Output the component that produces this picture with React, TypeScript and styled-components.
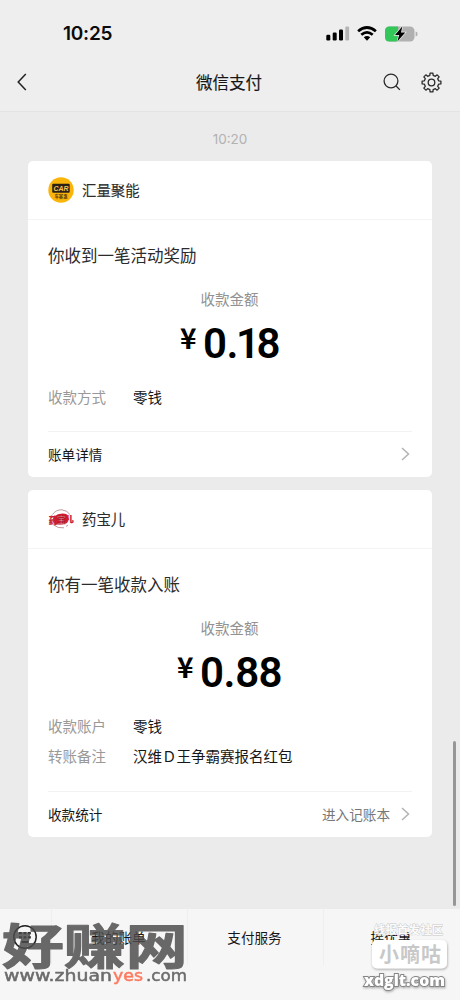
import React from 'react';
import styled, { createGlobalStyle } from 'styled-components';

const Global = createGlobalStyle`
  *{box-sizing:border-box}
  body{margin:0;background:#ebebeb;font-family:"Liberation Sans","Noto Sans CJK SC",sans-serif;color:#161616}
`;
const Screen = styled.div`
  position:relative;width:460px;height:1000px;overflow:hidden;background:#ebebeb;display:flex;flex-direction:column;
`;
const Header = styled.header`height:112px;background:#eeeeee;border-bottom:1px solid #e3e3e3;`;
const Status = styled.div`height:56px;padding:12px 42px 0 63px;display:flex;justify-content:space-between;align-items:center;`;
const Clock = styled.span`font:600 19px/24px Inter,sans-serif;letter-spacing:-.25px;color:#0a0a0a;`;
const StatusIcons = styled.div`display:flex;align-items:center;height:24px;`;
const Nav = styled.div`height:52px;display:grid;grid-template-columns:100px 1fr 100px;align-items:center;`;
const Title = styled.h1`
  margin:0 2px 0 0;text-align:center;font:400 16.5px/24px "Noto Sans CJK SC",sans-serif;-webkit-text-stroke:.15px #161616;
`;
const Back = styled.div`padding-left:16px;display:flex;`;
const Actions = styled.div`display:flex;gap:19px;align-items:center;padding-left:22px;`;
const Time = styled.div`height:49px;padding-top:17px;text-align:center;font:13.5px/20px Inter,sans-serif;color:#b2b2b2;`;
const Card = styled.section<{ $h: number }>`
  margin:0 28px 13px;height:${p => p.$h}px;background:#fff;border-radius:5px;display:flex;flex-direction:column;
  font-family:"Noto Sans CJK SC",sans-serif;
`;
const CardHead = styled.div`height:59px;flex:none;border-bottom:1px solid #f4f4f4;padding-left:20px;display:flex;align-items:center;gap:8px;`;
const Merchant = styled.span`font-size:14.4px;line-height:20px;color:#2b2b2b;-webkit-text-stroke:.1px #2b2b2b;`;
const Body = styled.div`flex:1;margin:0 20px;display:flex;flex-direction:column;`;
const Message = styled.div`margin-top:23px;font-size:16.5px;line-height:24px;color:#2b2b2b;`;
const Label = styled.div`margin:22px 1px 0 0;text-align:center;font-size:14.5px;line-height:20px;color:#929292;`;
const Amount = styled.div<{ $x: number }>`
  margin-top:10px;height:50px;padding-left:${p => p.$x}px;display:flex;color:#000;font:600 42px/50px Roboto,sans-serif;
`;
const Yen = styled.span`font:700 28px/37px "Noto Sans CJK SC",sans-serif;width:24px;`;
const Digit = styled.span<{ $w: number }>`width:${p => p.$w}px;display:flex;justify-content:center;`;
const Rows = styled.div`margin-top:18px;`;
const Row = styled.div`height:30px;display:flex;font-size:14.5px;line-height:20px;`;
const Key = styled.span`width:85px;color:#999;`;
const Value = styled.span`color:#161616;white-space:nowrap;`;
const Footer = styled.div`
  margin-top:auto;height:46px;border-top:1px solid #f2f2f2;display:flex;align-items:center;justify-content:space-between;font-size:13.6px;padding-bottom:1px;
`;
const More = styled.span`display:flex;align-items:center;gap:11px;color:#777;padding-right:2px;`;
const TabBar = styled.nav`
  margin-top:auto;height:91px;background:#f6f6f6;display:grid;grid-template-columns:51px 136px 136px 137px;font:13.6px/20px "Noto Sans CJK SC",sans-serif;
`;
const Tab = styled.div`height:56px;padding-right:2px;display:flex;align-items:center;justify-content:center;border-left:1px solid #efefef;
  &:first-child{border:0}`;
const ScrollThumb = styled.div`position:absolute;right:4px;top:741px;width:3px;height:165px;border-radius:2px;background:#979797;`;
const SiteMark = styled.div`position:absolute;left:0;top:910px;width:200px;height:84px;opacity:.83;`;
const CornerMark = styled.div`position:absolute;left:360px;top:918px;width:96px;height:76px;`;

const Chevron = () => (
  <svg width="9" height="14" viewBox="0 0 9 14" fill="none" stroke="#b3b3b3" strokeWidth="1.5"><path d="M1 1l6.5 6L1 13" /></svg>
);

const gearPath = (() => {
  const pts: string[] = [];
  const n = 8;
  for (let i = 0; i < n; i++) {
    const c = (i * 2 * Math.PI) / n - Math.PI / 2;
    [[-0.23, 7.3], [-0.15, 9.5], [0.15, 9.5], [0.23, 7.3]].forEach(([a, r]) => {
      pts.push(`${(10.5 + r * Math.cos(c + a)).toFixed(2)} ${(10.5 + r * Math.sin(c + a)).toFixed(2)}`);
    });
  }
  return `M${pts.join('L')}Z`;
})();

const Money = ({ x, value, widths }: { x: number; value: string; widths: number[] }) => (
  <Amount $x={x}><Yen>¥</Yen>{value.split('').map((c, i) => <Digit key={i} $w={widths[i]}>{c}</Digit>)}</Amount>
);

export default function App() {
  return (
    <Screen>
      <Global />
      <Header>
        <Status>
          <Clock>10:25</Clock>
          <StatusIcons>
            <svg width="92" height="20" viewBox="326 24.5 92 20">
              <g fill="#000">
                <rect x="326.3" y="35.2" width="4" height="5.8" rx="1.2" />
                <rect x="332.7" y="33" width="4" height="8" rx="1.2" />
                <rect x="339" y="30" width="4" height="11" rx="1.2" />
                <rect x="345.3" y="27" width="3.8" height="14" rx="1.2" fill="#b5b5b5" />
              </g>
              <g fill="none" stroke="#000" strokeWidth="2.7">
                <path d="M358.1 31.8Q367 24.2 375.9 31.8" />
                <path d="M361.3 35.3Q367 30.4 372.7 35.3" />
              </g>
              <path d="M363.8 37.7Q367 35.2 370.2 37.7L367 41.3Z" />
              <rect x="385" y="27" width="29.5" height="15" rx="4.5" fill="#b0b0b0" />
              <path d="M389.5 27H398V42H389.5Q385 42 385 37.5V31.5Q385 27 389.5 27Z" fill="#33c759" />
              <path d="M415.6 32q2 .3 2 2.5t-2 2.5z" fill="#b0b0b0" />
              <path d="M402.4 26.8L395 35.6H399.2L397.3 42L405.3 33H401Z" fill="#000" stroke="#eee" strokeWidth="1.4" paintOrder="stroke" />
            </svg>
          </StatusIcons>
        </Status>
        <Nav>
          <Back>
            <svg width="12" height="18" viewBox="0 0 12 18" fill="none" stroke="#222" strokeWidth="1.5"><path d="M9.8 1L2.2 9l7.6 8" /></svg>
          </Back>
          <Title>微信支付</Title>
          <Actions>
            <svg width="20" height="20" viewBox="0 0 20 20" fill="none" stroke="#2a2a2a" strokeWidth="1.3"><circle cx="9" cy="9" r="6.9" /><path d="M13.8 13.8l4.1 4.1" /></svg>
            <svg width="21" height="21" viewBox="0 0 21 21" fill="none" stroke="#2a2a2a" strokeWidth="1.3" strokeLinejoin="round"><path d={gearPath} /><circle cx="10.5" cy="10.5" r="3.3" /></svg>
          </Actions>
        </Nav>
      </Header>
      <Time>10:20</Time>

      <Card $h={316}>
        <CardHead>
          <svg width="26" height="26" viewBox="0 0 26 26">
            <circle cx="13" cy="13" r="12.7" fill="#fab50b" />
            <rect x="4.2" y="6.8" width="17.5" height="9" rx="1" fill="#2b2018" />
            <text x="13" y="14" textAnchor="middle" fontFamily="Liberation Sans" fontSize="7.8" fontWeight="700" fontStyle="italic" fill="#f8c755" textLength="15" lengthAdjust="spacingAndGlyphs">CAR</text>
            <text x="13" y="21" textAnchor="middle" fontFamily="Noto Sans CJK SC" fontSize="4.3" fontWeight="700" fill="#59350b">车容惠</text>
          </svg>
          <Merchant>汇量聚能</Merchant>
        </CardHead>
        <Body>
          <Message>你收到一笔活动奖励</Message>
          <Label>收款金额</Label>
          <Money x={132} value="0.18" widths={[22, 13, 18, 23]} />
          <Rows><Row><Key>收款方式</Key><Value>零钱</Value></Row></Rows>
          <Footer>账单详情<More><Chevron /></More></Footer>
        </Body>
      </Card>

      <Card $h={347}>
        <CardHead>
          <svg width="26" height="26" viewBox="0 0 26 26">
            <g fill="none" stroke="#b98a90" strokeWidth=".9"><path d="M4.5 8.5Q8 3.5 14 3.8Q19.5 4.6 22 8.5M5 18.5Q10 22.8 16 21.8M18 20.5l2-1.5" /></g>
            <path d="M5.5 11Q12 6 19 8.4L21 13.5L17 17.8Q11 19.2 5.5 17.5Z" fill="#d5192d" />
            <g fontFamily="Noto Sans CJK SC" fontWeight="700">
              <text x=".8" y="17.6" fontSize="9" fill="#c92232" stroke="#c92232" strokeWidth=".3">药</text>
              <text x="8.8" y="16.5" fontSize="9" fill="#f0b0b0" stroke="#a91222" strokeWidth=".6">宝</text>
              <text x="17.2" y="15.8" fontSize="8.4" fill="#c92232" stroke="#c92232" strokeWidth=".5">儿</text>
            </g>
          </svg>
          <Merchant>药宝儿</Merchant>
        </CardHead>
        <Body>
          <Message>你有一笔收款入账</Message>
          <Label>收款金额</Label>
          <Money x={129} value="0.88" widths={[22, 13, 22.5, 24]} />
          <Rows>
            <Row><Key>收款账户</Key><Value>零钱</Value></Row>
            <Row><Key>转账备注</Key><Value>汉维Ｄ王争霸赛报名红包</Value></Row>
          </Rows>
          <Footer>收款统计<More>进入记账本<Chevron /></More></Footer>
        </Body>
      </Card>

      <TabBar>
        <Tab>
          <svg width="26" height="26" viewBox="0 0 26 26">
            <circle cx="13" cy="13" r="11.2" fill="none" stroke="#222" strokeWidth="1.5" />
            <g fill="#222">
              {[7, 11.5, 16].map(x => <React.Fragment key={x}><rect x={x} y="8" width="2.8" height="2.3" /><rect x={x} y="12.2" width="2.8" height="2.3" /></React.Fragment>)}
              <rect x="9.5" y="17" width="7" height="2" />
            </g>
          </svg>
        </Tab>
        <Tab>我的账单</Tab>
        <Tab>支付服务</Tab>
        <Tab>摇优惠</Tab>
      </TabBar>
      <ScrollThumb />
      <SiteMark>
        <svg width="200" height="84" viewBox="0 910 200 84" style={{ overflow: 'visible' }}>
          <g fontFamily="Noto Sans CJK SC" fontWeight="700" fill="#4c4c4c" stroke="#4c4c4c" strokeWidth="1.2" strokeLinejoin="round">
            <text transform="translate(2 963.7) scale(1.19 .92)" fontSize="52">好赚网</text>
          </g>
          <g fontFamily="DejaVu Sans" fontSize="15.5" fill="#505050" stroke="#505050" strokeWidth=".5">
            <text x="4" y="981" textLength="108" lengthAdjust="spacingAndGlyphs">www.zhuan</text>
            <text x="113" y="981" textLength="30" lengthAdjust="spacingAndGlyphs" fill="#ff6040" stroke="#ff6040">yes</text>
            <text x="146" y="981" textLength="41" lengthAdjust="spacingAndGlyphs">.com</text>
          </g>
        </svg>
      </SiteMark>
      <CornerMark>
        <svg width="96" height="76" viewBox="360 918 96 76" style={{ overflow: 'visible' }}>
          <defs>
            <filter id="soft" x="-10%" y="-30%" width="125%" height="170%"><feDropShadow dx=".5" dy="1.2" stdDeviation=".9" floodColor="#777" floodOpacity=".6" /></filter>
          </defs>
          <text x="374" y="934" fontFamily="Noto Sans CJK SC" fontSize="11.3" fontWeight="700" fill="#fbfbfb" stroke="#c8c8c8" strokeWidth=".8" paintOrder="stroke" textLength="69">线报首发社区</text>
          <rect x="372" y="940" width="75" height="28.5" rx="5" fill="#fff" filter="url(#soft)" />
          <text x="379" y="962" fontFamily="Noto Sans CJK SC" fontSize="20" fontWeight="700" fill="#c8c8c8" textLength="62">小嘀咕</text>
          <text x="364" y="986" fontFamily="Open Sans" fontSize="15.5" fontWeight="800" fill="#fff" stroke="#858585" strokeWidth="1.8" paintOrder="stroke" filter="url(#soft)" textLength="81" lengthAdjust="spacingAndGlyphs">xdglt.com</text>
        </svg>
      </CornerMark>
    </Screen>
  );
}
